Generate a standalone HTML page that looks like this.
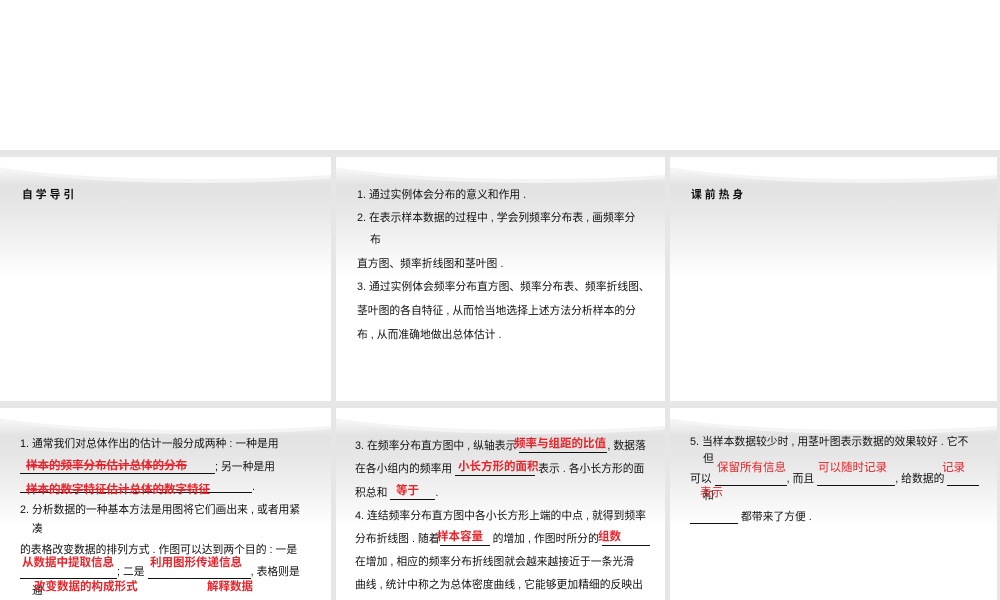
<!DOCTYPE html>
<html><head><meta charset="utf-8"><style>
*{margin:0;padding:0;box-sizing:border-box}
body{width:1000px;height:600px;background:#fff;position:relative;overflow:hidden;font-family:"Liberation Sans","Noto Sans CJK SC",sans-serif;color:#111}
.band{position:absolute;background:#e6e6e6}
.p{position:absolute;overflow:hidden;background:linear-gradient(#fff 0px,#fafafa 10px,#e2e2e2 28px,#e8e8e8 55px,#f6f6f6 95px,#fff 120px,#fff 100%)}
.p:before{content:"";position:absolute;left:-40px;top:-34px;width:480px;height:56px;border-radius:50%;border-bottom:4px solid #f4f4f4;background:#fff}
.t{position:absolute;white-space:nowrap;font-size:10.8px}
.r{position:absolute;white-space:nowrap;font-size:11.5px;font-weight:bold;color:#e8232a}
.rs{text-decoration:line-through;text-decoration-color:#e8232a}
.u{display:inline-block;border-bottom:1px solid #111;height:11px;vertical-align:bottom}
</style></head><body>
<div class="band" style="left:0;top:150px;width:1000px;height:7px"></div>
<div class="band" style="left:0;top:401px;width:1000px;height:7px"></div>
<div class="band" style="left:331px;top:150px;width:5px;height:450px"></div>
<div class="band" style="left:665px;top:150px;width:5px;height:450px"></div>
<div class="band" style="left:997px;top:150px;width:3px;height:450px"></div>

<div class="p" style="left:0;top:157px;width:331px;height:244px"></div>
<div class="p" style="left:336px;top:157px;width:329px;height:244px"></div>
<div class="p" style="left:670px;top:157px;width:327px;height:244px"></div>
<div class="p" style="left:0;top:408px;width:331px;height:192px"></div>
<div class="p" style="left:336px;top:408px;width:329px;height:192px"></div>
<div class="p" style="left:670px;top:408px;width:327px;height:192px"></div>

<div class="t" style="left:22px;top:186px;font-weight:bold;letter-spacing:3px">自学导引</div>
<div class="t" style="left:691px;top:186px;font-weight:bold;letter-spacing:3px">课前热身</div>

<div class="t" style="left:357px;top:186px">1. 通过实例体会分布的意义和作用 .</div>
<div class="t" style="left:357px;top:209px">2. 在表示样本数据的过程中 , 学会列频率分布表 , 画频率分</div>
<div class="t" style="left:370px;top:231px">布</div>
<div class="t" style="left:357px;top:255px">直方图、频率折线图和茎叶图 .</div>
<div class="t" style="left:357px;top:278px">3. 通过实例体会频率分布直方图、频率分布表、频率折线图、</div>
<div class="t" style="left:357px;top:302px">茎叶图的各自特征 , 从而恰当地选择上述方法分析样本的分</div>
<div class="t" style="left:357px;top:326px">布 , 从而准确地做出总体估计 .</div>

<!-- bottom left -->
<div class="t" style="left:20px;top:435px">1. 通常我们对总体作出的估计一般分成两种 : 一种是用</div>
<div class="t" style="left:20px;top:458px"><span class="u" style="width:195px"></span>; 另一种是用</div>
<div class="r rs" style="left:26px;top:457px">样本的频率分布估计总体的分布</div>
<div class="t" style="left:20px;top:481px"><span class="u" style="width:232px"></span>.</div>
<div class="r rs" style="left:26px;top:481px">样本的数字特征估计总体的数字特征</div>
<div class="t" style="left:20px;top:501px">2. 分析数据的一种基本方法是用图将它们画出来 , 或者用紧</div>
<div class="t" style="left:32px;top:520px">凑</div>
<div class="t" style="left:20px;top:541px">的表格改变数据的排列方式 . 作图可以达到两个目的 : 一是</div>
<div class="r" style="left:22px;top:554px">从数据中提取信息</div>
<div class="r" style="left:150px;top:554px">利用图形传递信息</div>
<div class="t" style="left:20px;top:563px"><span class="u" style="width:97px"></span>; 二是 <span class="u" style="width:103px"></span>, 表格则是</div>
<div class="t" style="left:32px;top:582px">通</div>
<div class="r" style="left:34px;top:578px">改变数据的构成形式</div>
<div class="r" style="left:207px;top:578px">解释数据</div>

<!-- bottom middle -->
<div class="t" style="left:355px;top:437px">3. 在频率分布直方图中 , 纵轴表示 <span class="u" style="width:88px"></span>, 数据落</div>
<div class="r" style="left:514px;top:435px">频率与组距的比值</div>
<div class="t" style="left:355px;top:460px">在各小组内的频率用 <span class="u" style="width:80px"></span> 表示 . 各小长方形的面</div>
<div class="r" style="left:458px;top:458px">小长方形的面积</div>
<div class="t" style="left:355px;top:484px">积总和 <span class="u" style="width:45px"></span>.</div>
<div class="r" style="left:396px;top:482px">等于</div>
<div class="t" style="left:355px;top:507px">4. 连结频率分布直方图中各小长方形上端的中点 , 就得到频率</div>
<div class="t" style="left:355px;top:530px">分布折线图 . 随着<span class="u" style="width:50px"></span> 的增加 , 作图时所分的 <span class="u" style="width:48px"></span></div>
<div class="r" style="left:437px;top:528px">样本容量</div>
<div class="r" style="left:598px;top:528px">组数</div>
<div class="t" style="left:355px;top:553px">在增加 , 相应的频率分布折线图就会越来越接近于一条光滑</div>
<div class="t" style="left:355px;top:576px">曲线 , 统计中称之为总体密度曲线 , 它能够更加精细的反映出</div>

<!-- bottom right -->
<div class="t" style="left:690px;top:433px">5. 当样本数据较少时 , 用茎叶图表示数据的效果较好 . 它不</div>
<div class="t" style="left:703px;top:450px">但</div>
<div class="r" style="left:717px;top:459px;font-weight:normal">保留所有信息</div>
<div class="r" style="left:818px;top:459px;font-weight:normal">可以随时记录</div>
<div class="r" style="left:942px;top:459px;font-weight:normal">记录</div>
<div class="t" style="left:690px;top:470px">可以 <span class="u" style="width:72px"></span>, 而且 <span class="u" style="width:78px"></span>, 给数据的 <span class="u" style="width:32px"></span></div>
<div class="t" style="left:703px;top:487px">和</div>
<div class="r" style="left:700px;top:484px;font-weight:normal">表示</div>
<div class="t" style="left:690px;top:508px"><span class="u" style="width:48px"></span> 都带来了方便 .</div>
</body></html>
